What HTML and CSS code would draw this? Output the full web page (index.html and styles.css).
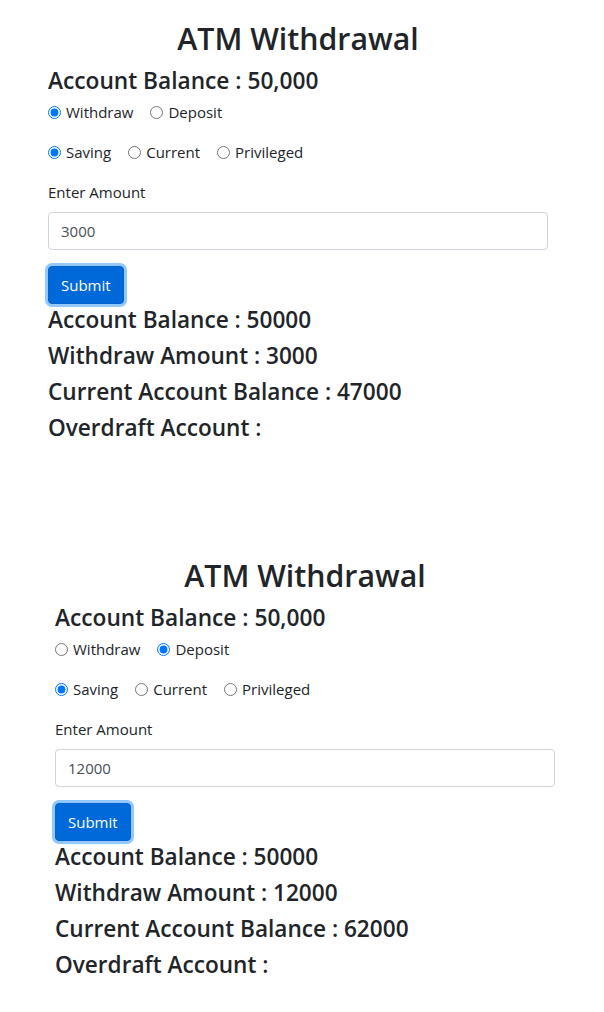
FILE: index.html
```html
<!DOCTYPE html>
<html lang="en">
<head>
<meta charset="utf-8">
<title>ATM Withdrawal</title>
<link rel="stylesheet" href="styles.css">
</head>
<body>
<section class="panel">
  <h1 class="title">ATM Withdrawal</h1>
  <h4 class="balance">Account Balance : 50,000</h4>
  <div class="radio-row first">
    <label class="opt"><input type="radio" name="t1" checked> Withdraw</label>
    <label class="opt"><input type="radio" name="t1"> Deposit</label>
  </div>
  <div class="radio-row">
    <label class="opt"><input type="radio" name="a1" checked> Saving</label>
    <label class="opt"><input type="radio" name="a1"> Current</label>
    <label class="opt"><input type="radio" name="a1"> Privileged</label>
  </div>
  <label class="field-label" for="amt1">Enter Amount</label>
  <input class="field" id="amt1" type="text" value="3000">
  <button class="btn" type="button">Submit</button>
  <div class="results">
    <h4 class="res">Account Balance : 50000</h4>
    <h4 class="res">Withdraw Amount : 3000</h4>
    <h4 class="res">Current Account Balance : 47000</h4>
    <h4 class="res">Overdraft Account :</h4>
  </div>
</section>
<section class="panel second">
  <h1 class="title">ATM Withdrawal</h1>
  <h4 class="balance">Account Balance : 50,000</h4>
  <div class="radio-row first">
    <label class="opt"><input type="radio" name="t2"> Withdraw</label>
    <label class="opt"><input type="radio" name="t2" checked> Deposit</label>
  </div>
  <div class="radio-row">
    <label class="opt"><input type="radio" name="a2" checked> Saving</label>
    <label class="opt"><input type="radio" name="a2"> Current</label>
    <label class="opt"><input type="radio" name="a2"> Privileged</label>
  </div>
  <label class="field-label" for="amt2">Enter Amount</label>
  <input class="field" id="amt2" type="text" value="12000">
  <button class="btn" type="button">Submit</button>
  <div class="results">
    <h4 class="res">Account Balance : 50000</h4>
    <h4 class="res">Withdraw Amount : 12000</h4>
    <h4 class="res">Current Account Balance : 62000</h4>
    <h4 class="res">Overdraft Account :</h4>
  </div>
</section>
</body>
</html>
```

FILE: styles.css
```css
* { box-sizing: border-box; }
html, body { margin: 0; padding: 0; background: #fff; }
body {
  font-family: "Open Sans", "Noto Sans", sans-serif;
  color: #212529;
  width: 604px;
  overflow: hidden;
}
.panel {
  height: 537px;
  padding: 17px 0 0 48px;
  width: 548px;
  display: flex;
  flex-direction: column;
  align-items: flex-start;
}
.panel.second { padding-left: 55px; width: 555px; height: auto; }
.title {
  align-self: stretch;
  margin: 0;
  font-size: 30.3px;
  font-weight: 600;
  line-height: 44px;
  text-align: center;
}
.balance {
  margin: 5px 0 0;
  font-size: 22.7px;
  font-weight: 600;
  line-height: 30px;
}
.radio-row {
  display: flex;
  align-items: center;
  height: 24px;
  margin-top: 16px;
  font-size: 15px;
}
.radio-row.first { margin-top: 4px; }
.opt {
  display: inline-flex;
  align-items: center;
  margin-right: 17px;
}
.opt input {
  margin: 0 5px 0 0;
  width: 13px;
  height: 13px;
}
.field-label {
  margin-top: 16px;
  font-size: 15px;
  line-height: 24px;
}
.field {
  margin-top: 8px;
  align-self: stretch;
  height: 38px;
  border: 1px solid #ced4da;
  border-radius: 4px;
  padding: 6px 12px;
  font-family: inherit;
  font-size: 15px;
  color: #495057;
  background: #fff;
}
.btn {
  margin-top: 16px;
  height: 38px;
  padding: 0 12px;
  border: 1px solid #0062cc;
  border-radius: 4px;
  background: #0069d9;
  color: #fff;
  font-family: inherit;
  font-size: 15px;
  box-shadow: 0 0 0 3px rgba(38, 143, 255, 0.5);
}
.res {
  margin: 0 0 4px;
  font-size: 22.6px;
  font-weight: 600;
  line-height: 32px;
}
```
